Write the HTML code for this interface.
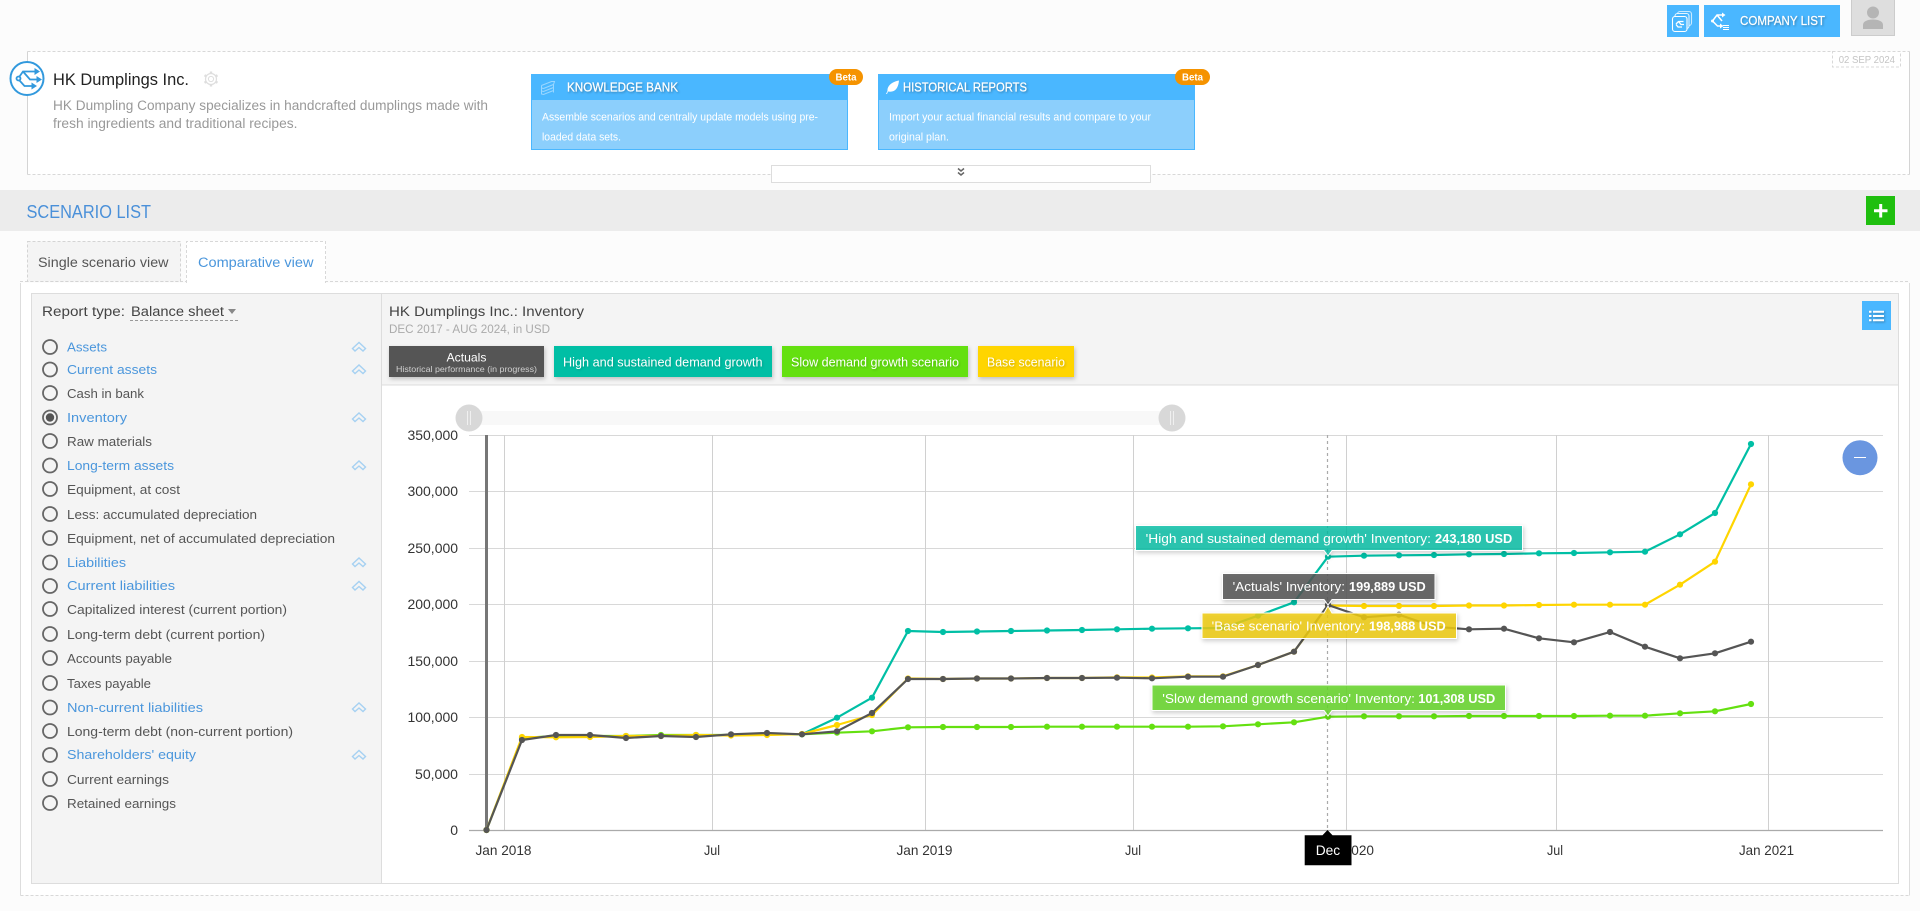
<!DOCTYPE html>
<html lang="en">
<head>
<meta charset="utf-8">
<title>HK Dumplings Inc. - Scenario list</title>
<style>
html,body{margin:0;padding:0;background:#fcfcfc;width:1920px;height:911px;overflow:hidden}
svg{display:block;position:absolute;left:0;top:0}
text{font-family:"Liberation Sans",Arial,sans-serif;white-space:pre}
.g{font-size:13px;fill:#555}
.b{font-size:13px;fill:#4a96dc}
.ax{font-size:14px;fill:#333}
.tt{font-size:13px;fill:#fff}
.ttb{font-size:13px;fill:#fff;font-weight:bold}
.sh{filter:drop-shadow(1px 1px 1px rgba(0,0,0,.3))}
.sl{filter:drop-shadow(1px 1px 1px rgba(0,0,0,.18))}
.hd{font-size:12.5px;fill:#fff;stroke:#fff;stroke-width:.25px}
.box{filter:drop-shadow(1px 2px 2px rgba(0,0,0,.22))}
</style>
</head>
<body>
<svg width="1920" height="911" viewBox="0 0 1920 911" xmlns="http://www.w3.org/2000/svg">
<defs>
<marker id="mt" markerWidth="7" markerHeight="7" refX="3.5" refY="3.5" markerUnits="userSpaceOnUse"><circle cx="3.5" cy="3.5" r="3.1" fill="#00bfa5"/></marker>
<marker id="my" markerWidth="7" markerHeight="7" refX="3.5" refY="3.5" markerUnits="userSpaceOnUse"><circle cx="3.5" cy="3.5" r="3.1" fill="#ffd500"/></marker>
<marker id="mg" markerWidth="7" markerHeight="7" refX="3.5" refY="3.5" markerUnits="userSpaceOnUse"><circle cx="3.5" cy="3.5" r="3.1" fill="#64e010"/></marker>
<marker id="md" markerWidth="7" markerHeight="7" refX="3.5" refY="3.5" markerUnits="userSpaceOnUse"><circle cx="3.5" cy="3.5" r="3.1" fill="#555"/></marker>
<g id="chev" fill="none" stroke="#a6d1f2" stroke-width="1.4"><path d="M-6.5 1.5L0-4.5L6.5 1.5L4 4L0 .5L-4 4Z"/></g>
</defs>

<!-- top bar -->
<rect x="1667" y="5" width="32" height="32" fill="#4ab7ff"/>
<g fill="#4ab7ff" stroke="#fff" stroke-width="1.1">
<rect x="1677.5" y="11.5" width="14" height="14" rx="2.5" stroke-opacity=".7"/>
<rect x="1675" y="13.5" width="14" height="15" rx="2.5" stroke-opacity=".85"/>
<rect x="1672.5" y="16.5" width="14.5" height="15" rx="2.5"/>
</g>
<path d="M1676 24l2.500-2.500h5M1678.500 21.500l2.500 3h3M1676 24.500l2 2.500h4" fill="none" stroke="#fff" stroke-width="1.300"/>
<rect x="1704" y="5" width="136" height="32" fill="#4ab7ff"/>
<path d="M1712.500 21L1717 15H1723M1717 15L1722 21M1712.500 21L1717.500 26H1721" fill="none" stroke="#fff" stroke-width="1.500"/>
<path d="M1722 12.500l3.500 2.500-3.500 2.500zM1720 23.500l3.500 2.500-3.500 2.500z" fill="#fff"/>
<circle cx="1712.500" cy="21" r="1.500" fill="#fff"/>
<path d="M1723 25.500h6M1723 27.500h6M1723 29.500h6" stroke="#fff" stroke-width="1"/>
<text class="hd sh" x="1740" y="25" textLength="85" lengthAdjust="spacingAndGlyphs">COMPANY LIST</text>
<rect x="1851.500" y="-1" width="43" height="36.500" fill="#dedede" stroke="#ccc"/>
<circle cx="1873" cy="12.500" r="6" fill="#b5b5b5"/>
<path d="M1863 29v-4c0-3.500 4-5.500 10-5.500s10 2 10 5.500v4z" fill="#b5b5b5"/>

<!-- company box -->
<rect x="27.500" y="51.500" width="1882" height="123" fill="#fff" stroke="none"/>
<path d="M27.500 51.500H1909.500M27.500 174.500H1909.500" stroke="#d8d8d8" stroke-dasharray="3 2"/>
<path d="M27.500 51.500V174.500M1909.500 51.500V174.500" stroke="#d4d4d4"/>
<rect x="1832.500" y="51.500" width="68" height="15.500" fill="#fff" stroke="#d8d8d8" stroke-dasharray="3 2"/>
<text x="1838.700" y="63" font-size="10.500" fill="#c4c4c4" textLength="56.300" lengthAdjust="spacingAndGlyphs">02 SEP 2024</text>

<circle cx="27" cy="78.500" r="16.500" fill="#fff" stroke="#3299dd" stroke-width="2"/>
<g fill="none" stroke="#3299dd" stroke-width="1.800">
<circle cx="18.500" cy="78.500" r="2"/>
<path d="M19.500 76.500L23 71.500H36M23 71.500L30 79.500H38M19.500 80.500L24.500 86H33"/>
</g>
<path d="M34.500 68l5.500 3.500-5.500 3.500zM36.500 76l5.500 3.500-5.500 3.500zM31.500 82.500l5.500 3.500-5.500 3.500z" fill="#3299dd"/>

<text x="53" y="85" font-size="17" fill="#222" textLength="136" lengthAdjust="spacingAndGlyphs">HK Dumplings Inc.</text>
<g fill="none" stroke="#dedede">
<circle cx="211" cy="79" r="5.500" stroke-width="1.200"/>
<circle cx="211" cy="79" r="2.600" stroke-width="1"/>
<path d="M211 71.500v2.200M217.500 75.250l-1.900 1.100M217.500 82.750l-1.900-1.100M211 86.500v-2.200M204.500 82.750l1.900-1.100M204.500 75.250l1.900 1.100" stroke-width="2.400"/>
</g>
<text x="53" y="110" font-size="13.500" fill="#999" textLength="435" lengthAdjust="spacingAndGlyphs">HK Dumpling Company specializes in handcrafted dumplings made with</text>
<text x="53" y="128" font-size="13.500" fill="#999" textLength="244.500" lengthAdjust="spacingAndGlyphs">fresh ingredients and traditional recipes.</text>

<!-- cards -->
<rect x="531.500" y="74.500" width="316" height="75" fill="#8ccffc" stroke="#4ab7ff"/>
<rect x="531" y="74" width="317" height="26" fill="#4ab7ff"/>
<g fill="none" stroke="#9bd7ff" stroke-width="1"><path d="M541.500 85.500l10-4h3l-1 3-10 4M541.500 85.500v2.500l2 .5M541.500 88.500v2.500l2 .5 10-4M541.500 91.500v2.500l2 .5 10-4M553.500 84.500v8"/></g>
<text class="hd sh" x="567" y="91.500" textLength="111" lengthAdjust="spacingAndGlyphs">KNOWLEDGE BANK</text>
<text x="542" y="120.500" font-size="11" fill="#fff" textLength="276" lengthAdjust="spacingAndGlyphs">Assemble scenarios and centrally update models using pre-</text>
<text x="542" y="140.500" font-size="11" fill="#fff" textLength="79" lengthAdjust="spacingAndGlyphs">loaded data sets.</text>
<rect x="829" y="69" width="34" height="16" rx="8" fill="#f59300"/>
<text x="835.500" y="80.500" font-size="10" font-weight="bold" fill="#fff" textLength="21" lengthAdjust="spacingAndGlyphs">Beta</text>

<rect x="878.500" y="74.500" width="316" height="75" fill="#8ccffc" stroke="#4ab7ff"/>
<rect x="878" y="74" width="317" height="26" fill="#4ab7ff"/>
<path d="M886 94l1.500-3c-.5-4 3-9 11.500-10.500-.5 5-2 10-7 11-1.500.3-3 .2-4 0l-1 2.500z" fill="#fff"/>
<text class="hd sh" x="903" y="91.500" textLength="124" lengthAdjust="spacingAndGlyphs">HISTORICAL REPORTS</text>
<text x="889" y="120.500" font-size="11" fill="#fff" textLength="262" lengthAdjust="spacingAndGlyphs">Import your actual financial results and compare to your</text>
<text x="889" y="140.500" font-size="11" fill="#fff" textLength="60" lengthAdjust="spacingAndGlyphs">original plan.</text>
<rect x="1175" y="69" width="35" height="16" rx="8" fill="#f59300"/>
<text x="1182" y="80.500" font-size="10" font-weight="bold" fill="#fff" textLength="21" lengthAdjust="spacingAndGlyphs">Beta</text>

<rect x="771.500" y="165.500" width="379" height="17" fill="#fff" stroke="#ddd"/>
<path d="M958 168.500l3 2.500 3-2.500M958 172.500l3 2.500 3-2.500" fill="none" stroke="#666" stroke-width="1.500"/>

<!-- band -->
<rect x="0" y="190" width="1920" height="41" fill="#ececec"/>
<text x="26.500" y="218" font-size="18" fill="#4a90d9" textLength="124.500" lengthAdjust="spacingAndGlyphs">SCENARIO LIST</text>
<rect x="1866" y="196" width="29" height="29" fill="#1fbf0f"/>
<path d="M1880.700 204v13.500M1874 210.700h13.500" stroke="#fff" stroke-width="3"/>

<!-- tabs -->
<path d="M20 281.500H1909" stroke="#d8d8d8" stroke-dasharray="3 2"/>
<rect x="27.500" y="241.500" width="153" height="40" fill="#f4f4f4" stroke="#d4d4d4" stroke-dasharray="3 2"/>
<text x="38" y="267" font-size="13.500" fill="#555" textLength="130.500" lengthAdjust="spacingAndGlyphs">Single scenario view</text>
<rect x="186.500" y="241.500" width="139.500" height="42" fill="#fff"/>
<path d="M186.500 283V241.500H325.500V283" fill="none" stroke="#d8d8d8" stroke-dasharray="3 2"/>
<text x="198" y="267" font-size="13.500" fill="#4a96dc" textLength="115.500" lengthAdjust="spacingAndGlyphs">Comparative view</text>

<!-- container -->
<rect x="21" y="283" width="888" height="612" fill="#fff"/>
<rect x="326" y="283" width="1583" height="612" fill="#fff"/>
<path d="M20.500 283V895.500M1909.500 283V895.500" stroke="#ddd"/>
<path d="M20.500 895.500H1909.500" stroke="#d8d8d8" stroke-dasharray="3 2"/>
<rect x="31.500" y="293.500" width="1867" height="590" fill="#fff" stroke="#ddd"/>

<!-- sidebar -->
<rect x="31.500" y="293.500" width="350" height="590" fill="#f4f4f4" stroke="#ddd"/>
<text x="42" y="316" font-size="13.500" fill="#444" textLength="83" lengthAdjust="spacingAndGlyphs">Report type:</text>
<text x="131" y="316" font-size="13.500" fill="#444" textLength="93" lengthAdjust="spacingAndGlyphs">Balance sheet</text>
<path d="M228 309h8l-4 5z" fill="#888"/>
<path d="M130 320.500H239" stroke="#999" stroke-dasharray="3 2"/>

<g fill="none" stroke="#666" stroke-width="1.800">
<circle cx="50" cy="347" r="7"/><circle cx="50" cy="369.500" r="7"/><circle cx="50" cy="393" r="7"/><circle cx="50" cy="417.500" r="7"/><circle cx="50" cy="441" r="7"/><circle cx="50" cy="465.500" r="7"/><circle cx="50" cy="489" r="7"/><circle cx="50" cy="514" r="7"/><circle cx="50" cy="538" r="7"/><circle cx="50" cy="562.500" r="7"/><circle cx="50" cy="586" r="7"/><circle cx="50" cy="609" r="7"/><circle cx="50" cy="634" r="7"/><circle cx="50" cy="658" r="7"/><circle cx="50" cy="683" r="7"/><circle cx="50" cy="707.500" r="7"/><circle cx="50" cy="731" r="7"/><circle cx="50" cy="755" r="7"/><circle cx="50" cy="779" r="7"/><circle cx="50" cy="803" r="7"/>
</g>
<circle cx="50" cy="417.500" r="4.200" fill="#555"/>

<text class="b" x="67" y="351.700" textLength="40" lengthAdjust="spacingAndGlyphs">Assets</text>
<text class="b" x="67" y="374" textLength="90" lengthAdjust="spacingAndGlyphs">Current assets</text>
<text class="g" x="67" y="398" textLength="77" lengthAdjust="spacingAndGlyphs">Cash in bank</text>
<text class="b" x="67" y="422" textLength="60" lengthAdjust="spacingAndGlyphs">Inventory</text>
<text class="g" x="67" y="446" textLength="85" lengthAdjust="spacingAndGlyphs">Raw materials</text>
<text class="b" x="67" y="470" textLength="107" lengthAdjust="spacingAndGlyphs">Long-term assets</text>
<text class="g" x="67" y="494" textLength="113" lengthAdjust="spacingAndGlyphs">Equipment, at cost</text>
<text class="g" x="67" y="519" textLength="190" lengthAdjust="spacingAndGlyphs">Less: accumulated depreciation</text>
<text class="g" x="67" y="543" textLength="268" lengthAdjust="spacingAndGlyphs">Equipment, net of accumulated depreciation</text>
<text class="b" x="67" y="567" textLength="59" lengthAdjust="spacingAndGlyphs">Liabilities</text>
<text class="b" x="67" y="590" textLength="108" lengthAdjust="spacingAndGlyphs">Current liabilities</text>
<text class="g" x="67" y="614" textLength="220" lengthAdjust="spacingAndGlyphs">Capitalized interest (current portion)</text>
<text class="g" x="67" y="639" textLength="198" lengthAdjust="spacingAndGlyphs">Long-term debt (current portion)</text>
<text class="g" x="67" y="663" textLength="105" lengthAdjust="spacingAndGlyphs">Accounts payable</text>
<text class="g" x="67" y="688" textLength="84" lengthAdjust="spacingAndGlyphs">Taxes payable</text>
<text class="b" x="67" y="712" textLength="136" lengthAdjust="spacingAndGlyphs">Non-current liabilities</text>
<text class="g" x="67" y="736" textLength="226" lengthAdjust="spacingAndGlyphs">Long-term debt (non-current portion)</text>
<text class="b" x="67" y="759" textLength="129" lengthAdjust="spacingAndGlyphs">Shareholders' equity</text>
<text class="g" x="67" y="784" textLength="102" lengthAdjust="spacingAndGlyphs">Current earnings</text>
<text class="g" x="67" y="808" textLength="109" lengthAdjust="spacingAndGlyphs">Retained earnings</text>

<use href="#chev" x="359" y="347"/><use href="#chev" x="359" y="369.500"/><use href="#chev" x="359" y="417.500"/><use href="#chev" x="359" y="465.500"/><use href="#chev" x="359" y="562.500"/><use href="#chev" x="359" y="586"/><use href="#chev" x="359" y="707.500"/><use href="#chev" x="359" y="755"/>

<!-- chart header -->
<rect x="381.500" y="293.500" width="1517" height="91.500" fill="#f4f4f4" stroke="#ddd"/>
<text x="389" y="316" font-size="14" fill="#444" textLength="195" lengthAdjust="spacingAndGlyphs">HK Dumplings Inc.: Inventory</text>
<text x="389" y="333" font-size="11.500" fill="#aaa" textLength="161" lengthAdjust="spacingAndGlyphs">DEC 2017 - AUG 2024, in USD</text>
<rect x="1862" y="301" width="29" height="29" fill="#4ab7ff"/>
<g class="sh"><path d="M1873 311.700h11M1873 316h11M1873 320.300h11M1869 311.700h2.500M1869 316h2.500M1869 320.300h2.500" stroke="#fff" stroke-width="2"/></g>

<g class="box">
<rect x="389" y="346" width="155" height="31" fill="#555"/>
<rect x="554" y="346" width="218" height="31" fill="#00bfa5"/>
<rect x="782" y="346" width="186" height="31" fill="#64e010"/>
<rect x="978" y="346" width="96" height="31" fill="#ffd500"/>
</g>
<text x="446.500" y="361.500" font-size="12" fill="#fff" textLength="40" lengthAdjust="spacingAndGlyphs">Actuals</text>
<text x="396" y="372" font-size="8.500" fill="#d0d0d0" textLength="141" lengthAdjust="spacingAndGlyphs">Historical performance (in progress)</text>
<text class="sl" x="563" y="366.500" font-size="12.500" fill="#fff" textLength="199.500" lengthAdjust="spacingAndGlyphs">High and sustained demand growth</text>
<text class="sl" x="791" y="366.500" font-size="12.500" fill="#fff" textLength="168" lengthAdjust="spacingAndGlyphs">Slow demand growth scenario</text>
<text class="sl" x="987" y="366.500" font-size="12.500" fill="#fff" textLength="78" lengthAdjust="spacingAndGlyphs">Base scenario</text>

<!-- slider -->
<rect x="469" y="411" width="703" height="14" fill="#f8f8f8"/>
<circle cx="469" cy="418" r="13.500" fill="#d8d8d8"/>
<circle cx="1172" cy="418" r="13.500" fill="#d8d8d8"/>
<path d="M467.500 411v14M470.500 411v14M1170.500 411v14M1173.500 411v14" stroke="#f0f0f0"/>

<!-- grid -->
<g stroke="#d8d8d8" stroke-width="1">
<path d="M469 435.500H1883M469 491.500H1883M469 548.500H1883M469 604.500H1883M469 661.500H1883M469 717.500H1883M469 774.500H1883"/>
</g>
<g stroke="#d0d0d0" stroke-width="1">
<path d="M504.500 435V830M712.500 435V830M925.500 435V830M1133.500 435V830M1346.500 435V830M1556.500 435V830M1768.500 435V830"/>
</g>
<path d="M469 830.500H1883" stroke="#aaa" stroke-width="1.200"/>
<rect x="485" y="435" width="3" height="395" fill="#777"/>
<path d="M1327.500 435V830" stroke="#aaa" stroke-dasharray="3 3" stroke-width="1.200"/>

<!-- labels -->
<g text-anchor="end">
<text class="ax" x="458" y="440" textLength="50.500" lengthAdjust="spacingAndGlyphs">350,000</text>
<text class="ax" x="458" y="496" textLength="50.500" lengthAdjust="spacingAndGlyphs">300,000</text>
<text class="ax" x="458" y="553" textLength="50.500" lengthAdjust="spacingAndGlyphs">250,000</text>
<text class="ax" x="458" y="609" textLength="50.500" lengthAdjust="spacingAndGlyphs">200,000</text>
<text class="ax" x="458" y="666" textLength="50.500" lengthAdjust="spacingAndGlyphs">150,000</text>
<text class="ax" x="458" y="722" textLength="50.500" lengthAdjust="spacingAndGlyphs">100,000</text>
<text class="ax" x="458" y="779" textLength="43" lengthAdjust="spacingAndGlyphs">50,000</text>
<text class="ax" x="458" y="835">0</text>
</g>
<text class="ax" x="475.500" y="855" textLength="56" lengthAdjust="spacingAndGlyphs">Jan 2018</text>
<text class="ax" x="704" y="855" textLength="16" lengthAdjust="spacingAndGlyphs">Jul</text>
<text class="ax" x="896.500" y="855" textLength="56" lengthAdjust="spacingAndGlyphs">Jan 2019</text>
<text class="ax" x="1125" y="855" textLength="16" lengthAdjust="spacingAndGlyphs">Jul</text>
<text class="ax" x="1318" y="855" textLength="56" lengthAdjust="spacingAndGlyphs">Jan 2020</text>
<text class="ax" x="1547" y="855" textLength="16" lengthAdjust="spacingAndGlyphs">Jul</text>
<text class="ax" x="1739" y="855" textLength="55" lengthAdjust="spacingAndGlyphs">Jan 2021</text>

<!-- series -->
<g fill="none" stroke-width="2.200" stroke-linejoin="round">
<polyline stroke="#00bfa5" marker-start="url(#mt)" marker-mid="url(#mt)" marker-end="url(#mt)" points="802,734.300 837,717.700 872,697.700 908,631 943,632 977,631.500 1011,631 1047,630.500 1082,630 1117,629.300 1152,628.700 1188,628.300 1223,628 1258,615.700 1294,602.300 1328,556.700 1364,555.700 1399,555.300 1434,555 1469,554.300 1504,554 1539,553.300 1574,553 1610,552.300 1645,551.700 1680,534.300 1715,513 1751,444"/>
<polyline stroke="#64e010" marker-start="url(#mg)" marker-mid="url(#mg)" marker-end="url(#mg)" points="486.500,830 522,738 556,736 590,736 626,736 661,735 696,735 731,735 767,734.500 802,734.300 837,732.700 872,731.300 908,727.300 943,727 977,727 1011,727 1047,726.700 1082,726.700 1117,726.700 1152,726.700 1188,726.700 1223,726.300 1258,724.300 1294,722.300 1328,716.700 1364,716.300 1399,716.300 1434,716.300 1469,716 1504,716 1539,716 1574,716 1610,715.700 1645,715.700 1680,713.300 1715,711.300 1751,704"/>
<polyline stroke="#ffd500" marker-start="url(#my)" marker-mid="url(#my)" marker-end="url(#my)" points="486.500,830 522,737 556,737.300 590,737 626,736 661,736 696,735 731,735.500 767,735 802,734 837,725 872,715 908,678.500 943,679 977,678.500 1011,678.500 1047,678 1082,678 1117,677.300 1152,677.500 1188,676.300 1223,676.300 1258,665 1294,651.700 1328,605.500 1364,606 1399,606 1434,606 1469,605.500 1504,605.500 1539,605 1574,604.700 1610,604.700 1645,604.700 1680,584.700 1715,561.700 1751,484.300"/>
<polyline stroke="#555" marker-start="url(#md)" marker-mid="url(#md)" marker-end="url(#md)" points="486.500,830 522,740 556,735 590,735 626,738 661,736 696,737 731,734.300 767,733 802,734.300 837,731.300 872,713 908,679 943,679 977,678.500 1011,678.500 1047,678 1082,678 1117,677.700 1152,678.300 1188,676.700 1223,676.700 1258,665 1294,651.700 1328,605 1364,617.300 1399,614.700 1434,626.700 1469,629.300 1504,628.700 1539,638.300 1574,642.300 1610,632 1645,646.700 1680,658.300 1715,653.300 1751,641.700"/>
</g>

<!-- minus -->
<circle cx="1860" cy="457.700" r="17.500" fill="#6a96e0"/>
<path d="M1854 457.500h12" stroke="#fff" stroke-width="1"/>

<!-- tooltips -->
<g class="box" stroke="#fff" stroke-width="1">
<path d="M1135.500 525.500H1522.500V550.500H1332L1328 556L1324 550.500H1135.500Z" fill="#00bfa5" fill-opacity=".8"/>
<path d="M1222.500 573.500H1435V599.500H1332L1328 605L1324 599.500H1222.500Z" fill="#555" fill-opacity=".85"/>
<path d="M1202 613H1324L1328 606L1332 613H1456.500V638.500H1202Z" fill="#f0cc10" fill-opacity=".85"/>
<path d="M1152 685H1505.500V710.500H1332L1328 716L1324 710.500H1152Z" fill="#66d62a" fill-opacity=".85"/>
</g>
<text class="tt" x="1145.700" y="543" textLength="285.300" lengthAdjust="spacingAndGlyphs">'High and sustained demand growth' Inventory:</text>
<text class="ttb" x="1435" y="543" textLength="77.300" lengthAdjust="spacingAndGlyphs">243,180 USD</text>
<text class="tt" x="1232.700" y="591" textLength="112.300" lengthAdjust="spacingAndGlyphs">'Actuals' Inventory:</text>
<text class="ttb" x="1349" y="591" textLength="76.700" lengthAdjust="spacingAndGlyphs">199,889 USD</text>
<text class="tt" x="1211.700" y="630.500" textLength="153.300" lengthAdjust="spacingAndGlyphs">'Base scenario' Inventory:</text>
<text class="ttb" x="1369" y="630.500" textLength="76.700" lengthAdjust="spacingAndGlyphs">198,988 USD</text>
<text class="tt" x="1162.300" y="703" textLength="252.700" lengthAdjust="spacingAndGlyphs">'Slow demand growth scenario' Inventory:</text>
<text class="ttb" x="1418.300" y="703" textLength="77" lengthAdjust="spacingAndGlyphs">101,308 USD</text>

<!-- crosshair label -->
<path d="M1304.700 835.300H1322.500L1327.500 830L1332.500 835.300H1351.500V865.300H1304.700Z" fill="#000"/>
<text x="1315.700" y="855" font-size="14" fill="#fff" textLength="24.500" lengthAdjust="spacingAndGlyphs">Dec</text>
</svg>
</body>
</html>
